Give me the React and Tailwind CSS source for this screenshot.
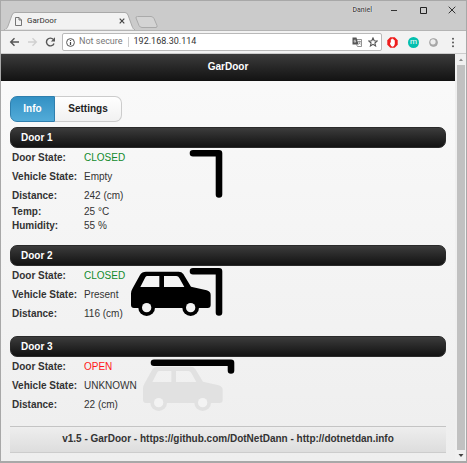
import React from "react";

const doors = [
  {
    name: "Door 1",
    state: "CLOSED",
    vehicle: "Empty",
    distance: "242 (cm)",
    climate: [
      ["Temp:", "25 °C"],
      ["Humidity:", "55 %"],
    ],
  },
  { name: "Door 2", state: "CLOSED", vehicle: "Present", distance: "116 (cm)" },
  { name: "Door 3", state: "OPEN", vehicle: "UNKNOWN", distance: "22 (cm)" },
];

function Car({ color }) {
  return (
    <g transform={color === "#000" ? "translate(-11 -11) scale(.3333)" : "translate(-11 -7) scale(.3333)"}>
      <path
        fill={color}
        fillRule="evenodd"
        d="M33 150V116Q33 108 38 100L60 60Q66 50 78 50H176Q185 50 190 57L213 95L260 106Q272 109 272 120V150Q272 159 263 159H42Q33 159 33 150ZM61 96H118V63H82Q78 63 76 67ZM132 63V96H193L178 69Q175 63 169 63Z"
      />
      <circle cx="80" cy="158" r="25" fill={color} />
      <circle cx="212" cy="158" r="25" fill={color} />
      <circle cx="80" cy="158" r="14" fill="#f3f3f3" />
      <circle cx="212" cy="158" r="14" fill="#f3f3f3" />
    </g>
  );
}

function DoorPicture({ state, vehicle }) {
  return (
    <svg width="94" height="57" viewBox="0 0 94 57" className="ml-[6px] shrink-0" aria-hidden="true">
      {vehicle === "Present" && <Car color="#000" />}
      {vehicle === "UNKNOWN" && <Car color="#e1e1e1" />}
      <path
        d={state === "OPEN" ? "M11 5.7H88V13.5" : "M62 5.3H88V46.5"}
        fill="none"
        stroke="#000"
        strokeWidth="6.6"
        strokeLinecap="round"
        strokeLinejoin="round"
      />
    </svg>
  );
}

function Row({ label, value, valueClass = "" }) {
  return (
    <tr>
      <th scope="row" className="w-[74px] whitespace-nowrap p-0 pl-0.5 text-left font-bold">{label}</th>
      <td className={"whitespace-nowrap p-0 " + valueClass}>{value}</td>
    </tr>
  );
}

function Door({ door }) {
  return (
    <section className="mb-[13px] last:mb-3">
      <h2 className="flex h-[21px] items-center rounded-[7px] border border-[#2a2a2a] bg-linear-to-b from-[#3c3c3c] to-[#131313] px-[10px] font-bold text-white">
        {door.name}
      </h2>
      <div className="flex items-start">
        <table className="h-[57px] border-collapse">
          <tbody>
            <Row label="Door State:" value={door.state} valueClass={door.state === "OPEN" ? "text-[#ff1818]" : "text-[#128a2c]"} />
            <Row label="Vehicle State:" value={door.vehicle} />
            <Row label="Distance:" value={door.distance} />
          </tbody>
        </table>
        <DoorPicture state={door.state} vehicle={door.vehicle} />
      </div>
      {door.climate && (
        <table className="h-[27px] border-collapse leading-[13px]">
          <tbody>
            {door.climate.map(([label, value]) => (
              <Row key={label} label={label} value={value} />
            ))}
          </tbody>
        </table>
      )}
    </section>
  );
}

function TitleBar() {
  return (
    <div className="flex h-[29px] items-end bg-[#cbcbcb]">
      <div className="relative ml-[3px] flex h-[18px] w-[131px] items-center pl-[11px] pr-[10px] text-[8px] text-[#333]">
        <svg className="absolute inset-0" width="131" height="18" viewBox="0 0 131 18" aria-hidden="true">
          <path d="M0 18C3 17 3 16 4 14L8 3Q9 .5 11 .5H121Q123 .5 124 3L128 14C129 16 129 17 131 18Z" fill="#f2f2f2" stroke="#a9a9a9" />
          <path d="M1 18H130" stroke="#f2f2f2" />
        </svg>
        <svg className="relative" width="7" height="9" viewBox="0 0 7 9" fill="none" stroke="#666" strokeWidth=".9" aria-hidden="true">
          <path d="M.5 .5H4L6.5 3V8.5H.5ZM4 .5V3H6.5" />
        </svg>
        <span className="relative ml-[5px] flex-1">GarDoor</span>
        <button aria-label="Close tab" className="relative">
          <svg width="6" height="6" viewBox="0 0 6 6" stroke="#444" strokeWidth="1.2">
            <path d="M.7 .7L5.3 5.3M5.3 .7L.7 5.3" />
          </svg>
        </button>
      </div>
      <button aria-label="New tab" className="pb-[2px]">
        <svg width="23" height="12" viewBox="0 0 23 12">
          <path d="M2.5 .5H16Q18 .5 19 2.5L22 9.5Q22.500 11.500 21 11.500H7Q5 11.500 4 9.500L1 2Q.5 .5 2.500 .5Z" fill="#d4d4d4" stroke="#aaa" />
        </svg>
      </button>
      <div className="ml-auto flex h-full items-center gap-[18px] pb-[11px] pr-[10px]">
        <span className="text-[7px] font-medium text-[#444] [text-shadow:0_0_1px_#fff,0_0_1px_#fff]">Daniel</span>
        <button aria-label="Minimize">
          <svg width="8" height="8" viewBox="0 0 8 8" stroke="#333"><path d="M1 4.5H7" /></svg>
        </button>
        <button aria-label="Maximize" className="ml-[3px]">
          <svg width="8" height="8" viewBox="0 0 8 8" fill="none" stroke="#222"><path d="M1.500 1.500H7.500V7.500H1.500Z" /></svg>
        </button>
        <button aria-label="Close window" className="ml-[3px]">
          <svg width="8" height="8" viewBox="0 0 8 8" stroke="#222" strokeWidth=".9"><path d="M.7 .7L7.300 7.300M7.300 .7L.7 7.300" /></svg>
        </button>
      </div>
    </div>
  );
}

function Toolbar() {
  return (
    <div className="flex h-6 items-center border-b border-t border-b-[#ccc] border-t-[#b4b4b4] bg-[#f2f2f2] pl-[8px] pr-[10px]">
      <button aria-label="Back">
        <svg width="11" height="10" viewBox="0 0 11 10" fill="none" stroke="#555" strokeWidth="1.400"><path d="M10 5H2M5.500 1.200L1.700 5L5.500 8.800" /></svg>
      </button>
      <button aria-label="Forward" className="ml-[7px]">
        <svg width="11" height="10" viewBox="0 0 11 10" fill="none" stroke="#d0d0d0" strokeWidth="1.400"><path d="M1 5H9M5.500 1.200L9.300 5L5.500 8.800" /></svg>
      </button>
      <button aria-label="Reload" className="ml-[7px]">
        <svg width="11" height="10" viewBox="0 0 11 10"><path d="M9 6.500A3.900 3.900 0 1 1 8.300 2.400" fill="none" stroke="#555" strokeWidth="1.400" /><path d="M10 .3V4.400H5.900Z" fill="#555" /></svg>
      </button>
      <div className="ml-[6px] flex h-[18px] min-w-0 flex-1 items-center rounded-[2px] border border-[#b9b9b9] bg-white pl-[3px] pr-[3px]">
        <svg width="9" height="9" viewBox="0 0 9 9" className="shrink-0" aria-hidden="true">
          <circle cx="4.500" cy="4.500" r="3.900" fill="none" stroke="#555" />
          <path d="M4.500 4V7M4.500 2V3.100" stroke="#444" strokeWidth="1.200" />
        </svg>
        <label htmlFor="address" className="ml-1 whitespace-nowrap text-[9px] text-[#777]">Not secure</label>
        <span className="ml-[5px] h-[10px] w-px bg-[#ccc]" />
        <input id="address" defaultValue="192.168.30.114" className="ml-[5px] min-w-0 flex-1 text-[9px] text-[#333] outline-none" />
        <button aria-label="Translate">
          <svg width="10" height="10" viewBox="0 0 10 10">
            <path d="M4.500 2.500H9.500V9.500H5.500L4.500 7.500" fill="#fff" stroke="#777" strokeWidth=".8" />
            <path d="M.5 .5H4.500L6.500 7.500H.5Z" fill="#555" />
            <path d="M3.800 3.200H2.200V5.100H3.700V4.200H3" fill="none" stroke="#fff" strokeWidth=".6" />
            <path d="M5.800 4.500H8.800M7.300 3.800V4.500M8.300 4.500Q8 6.500 6.400 7.200M6.700 5.300Q7.500 6.800 8.700 7.200" fill="none" stroke="#666" strokeWidth=".6" />
          </svg>
        </button>
        <button aria-label="Bookmark" className="ml-[6px]">
          <svg width="10" height="10" viewBox="0 0 10 10"><path d="M5 .9L6.200 3.700L9.200 4L6.900 6L7.600 9L5 7.400L2.400 9L3.100 6L.8 4L3.800 3.700Z" fill="none" stroke="#555" strokeWidth="1.100" /></svg>
        </button>
      </div>
      <div className="ml-[5px] flex items-center gap-[10px]">
        <button aria-label="Ad blocker">
          <svg width="11" height="11" viewBox="0 0 11 11">
            <path d="M3.300 .3H7.700L10.700 3.300V7.700L7.700 10.700H3.300L.3 7.700V3.300Z" fill="#ee1c1c" />
            <path d="M3 5.200L3.800 5.900V2.600Q4.300 1.900 4.700 2.600V1.800Q5.300 1 5.800 1.800V2.400Q6.300 1.800 6.800 2.500V3.300Q7.400 2.800 7.800 3.500V7Q7.300 9.700 5.500 9.700Q4 9.700 3.100 7Z" fill="#fff" />
          </svg>
        </button>
        <button aria-label="Extension m">
          <span className="flex h-[11px] w-[11px] items-center justify-center rounded-full bg-[#04bfae] pb-px text-[8px] leading-none text-white">m</span>
        </button>
        <button aria-label="Extension">
          <svg width="9" height="9" viewBox="0 0 9 9"><circle cx="4.500" cy="4.500" r="4" fill="#aaa" stroke="#999" strokeWidth=".6" /><circle cx="4" cy="3.800" r="2.600" fill="#eee" /></svg>
        </button>
        <button aria-label="Menu" className="ml-[2px]">
          <svg width="6" height="11" viewBox="0 0 6 11" fill="#555"><circle cx="3" cy="1.700" r="1" /><circle cx="3" cy="5.500" r="1" /><circle cx="3" cy="9.300" r="1" /></svg>
        </button>
      </div>
    </div>
  );
}

function Scrollbar() {
  return (
    <div className="flex w-[11px] shrink-0 flex-col items-center bg-[#f0f0f0] pl-[2px] pr-px" aria-hidden="true">
      <svg width="8" height="11" viewBox="0 0 8 11"><path d="M2 7L4 4.500L6 7Z" fill="#888" /></svg>
      <div className="w-full flex-1 bg-[#c1c1c1]" />
      <svg width="8" height="11" viewBox="0 0 8 11"><path d="M1.500 4L4 7L6.500 4Z" fill="#444" /></svg>
    </div>
  );
}

export default function App() {
  return (
    <div className="flex min-h-screen flex-col border border-b-2 border-[#a8a8a8] font-[Roboto,sans-serif]">
      <TitleBar />
      <Toolbar />
      <div className="flex flex-1">
        <div className="flex min-w-0 flex-1 flex-col bg-linear-to-b from-[#fafafa] to-[#eeeeee] font-['Liberation_Sans',Arial,sans-serif] text-[10px] leading-[14px] text-[#333]">
          <header className="flex h-[27px] items-center justify-center border-b border-[#111] bg-linear-to-b from-[#3c3c3c] to-[#141414]">
            <h1 className="font-bold text-white">GarDoor</h1>
          </header>
          <main className="px-[9px] pt-[15px]">
            <div className="mb-[5px] flex h-[26px]">
              <button className="w-[45px] rounded-l-[7px] border border-[#2f7fae] bg-linear-to-b from-[#3391c4] to-[#52abd8] font-bold text-white">Info</button>
              <button className="w-[67px] rounded-r-[7px] border border-l-0 border-[#ccc] bg-linear-to-b from-white to-[#f1f1f1] font-bold text-[#222]">Settings</button>
            </div>
            {doors.map((door) => (
              <Door key={door.name} door={door} />
            ))}
          </main>
          <footer className="mx-[9px] mb-2 mt-auto flex h-[27px] items-center justify-center border-b border-t border-b-[#ccc] border-t-[#c4c4c4] bg-linear-to-b from-[#eeeeee] to-[#dddddd] pb-px font-bold">
            v1.5 - GarDoor - https://github.com/DotNetDann - http://dotnetdan.info
          </footer>
        </div>
        <Scrollbar />
      </div>
    </div>
  );
}
